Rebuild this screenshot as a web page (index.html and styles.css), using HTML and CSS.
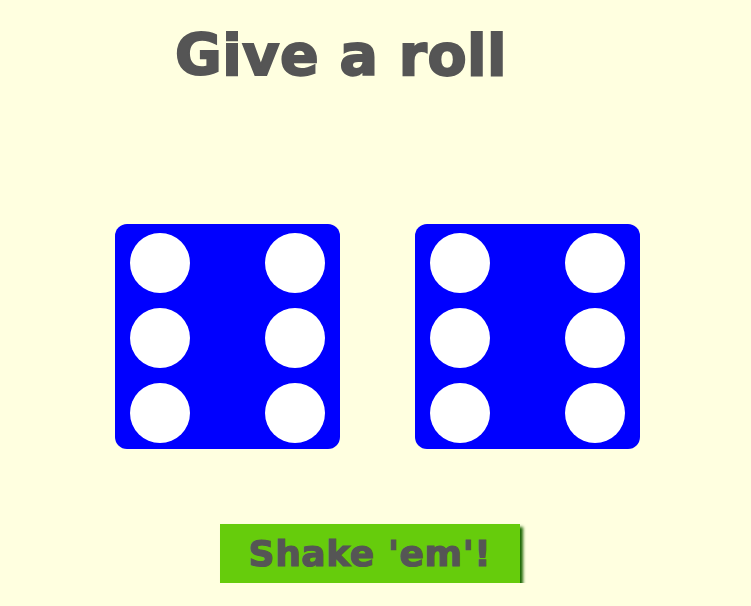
FILE: index.html
```html
<!DOCTYPE html>
<html>
<head>
<meta charset="utf-8">
<link rel="stylesheet" href="styles.css">
</head>
<body>
<h1 class="title">Give a roll</h1>
<div class="dice">
  <div class="die">
    <span class="dot"></span><span class="dot"></span>
    <span class="dot"></span><span class="dot"></span>
    <span class="dot"></span><span class="dot"></span>
  </div>
  <div class="die">
    <span class="dot"></span><span class="dot"></span>
    <span class="dot"></span><span class="dot"></span>
    <span class="dot"></span><span class="dot"></span>
  </div>
</div>
<button class="shake">Shake 'em'!</button>
</body>
</html>
```
FILE: styles.css
```css
html, body {
  margin: 0;
  padding: 0;
  background: #ffffe0;
}
body {
  font-family: "DejaVu Sans", "Liberation Sans", sans-serif;
  color: #555555;
}
.title {
  margin: 0;
  padding: 22px 0 0 175px;
  font-size: 57px;
  font-weight: bold;
  line-height: 66px;
  letter-spacing: 0.5px;
  color: #555555;
  -webkit-text-stroke: 2px #555555;
}
.dice {
  display: flex;
  gap: 75px;
  padding-left: 115px;
  margin-top: 136px;
}
.die {
  width: 225px;
  height: 225px;
  box-sizing: border-box;
  background: #0000ff;
  border-radius: 12px;
  padding: 9px 15px 6px;
  display: grid;
  grid-template-columns: 60px 60px;
  grid-template-rows: 60px 60px 60px;
  justify-content: space-between;
  row-gap: 15px;
}
.dot {
  width: 60px;
  height: 60px;
  border-radius: 50%;
  background: #ffffff;
}
.shake {
  display: block;
  margin: 75px 0 0 220px;
  width: 300px;
  height: 59px;
  padding: 0;
  border: none;
  background: #66cc0c;
  color: #555555;
  font-family: "DejaVu Sans", "Liberation Sans", sans-serif;
  font-weight: bold;
  font-size: 36px;
  letter-spacing: 0.6px;
  -webkit-text-stroke: 1.2px #555555;
  box-shadow: 3px 3px 3px #1a6600;
}
```
